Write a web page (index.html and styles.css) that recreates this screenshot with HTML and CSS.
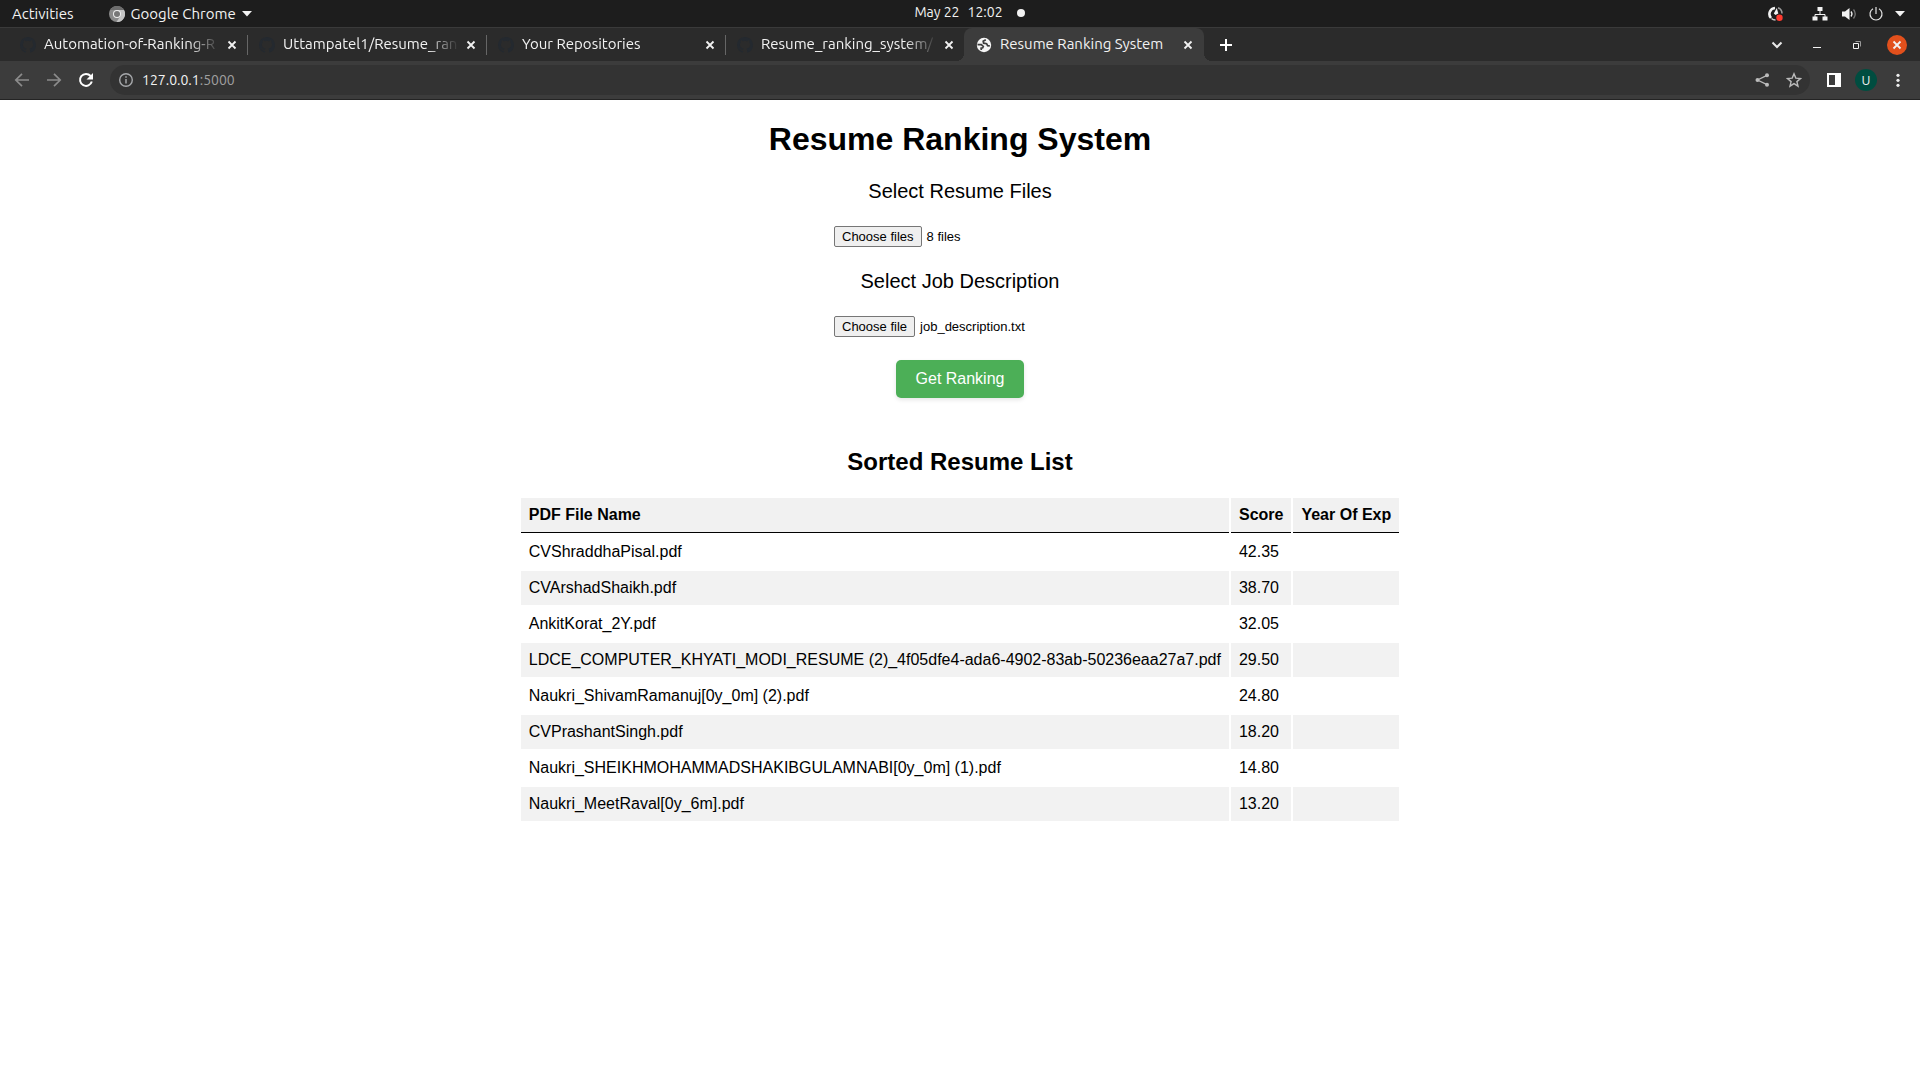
FILE: index.html
```html
<!DOCTYPE html>
<html lang="en">
<head>
<meta charset="utf-8">
<title>Resume Ranking System</title>
<link rel="stylesheet" href="styles.css">
</head>
<body>
<svg class="defs" aria-hidden="true">
  <symbol id="github" viewBox="0 0 16 16"><path d="M8 0C3.58 0 0 3.58 0 8c0 3.54 2.29 6.53 5.47 7.59.4.07.55-.17.55-.38 0-.19-.01-.82-.01-1.49-2.01.37-2.53-.49-2.69-.94-.09-.23-.48-.94-.82-1.13-.28-.15-.68-.52-.01-.53.63-.01 1.08.58 1.23.82.72 1.21 1.87.87 2.33.66.07-.52.28-.87.51-1.07-1.78-.2-3.64-.89-3.64-3.95 0-.87.31-1.59.82-2.15-.08-.2-.36-1.02.08-2.12 0 0 .67-.21 2.2.82a7.6 7.6 0 0 1 4 0c1.53-1.04 2.2-.82 2.2-.82.44 1.1.16 1.92.08 2.12.51.56.82 1.27.82 2.15 0 3.07-1.87 3.75-3.65 3.95.29.25.54.73.54 1.48 0 1.07-.01 1.93-.01 2.2 0 .21.15.46.55.38A8.01 8.01 0 0 0 16 8c0-4.42-3.58-8-8-8z"/></symbol>
  <symbol id="cross" viewBox="0 0 16 16"><path d="M4.500 4.500l7 7M11.500 4.500l-7 7" fill="none" stroke="currentColor" stroke-width="1.800"/></symbol>
  <symbol id="caret" viewBox="0 0 10 6"><path d="M0 0h10L5 5.500z"/></symbol>
</svg>

<header class="system-bar">
  <div class="system-left">
    <button class="plain">Activities</button>
    <button class="plain app-menu">
      <svg class="icon16" viewBox="0 0 16 16"><circle cx="8" cy="8" r="8" fill="#8a8a8a"/><path d="M8 4h7a8 8 0 0 1-7.500 12L11.500 10z" fill="#c4c4c4"/><path d="M1.200 4A8 8 0 0 1 15 4H8z" fill="#6d6d6d"/><circle cx="8" cy="8" r="4" fill="#eee"/><circle cx="8" cy="8" r="3" fill="#777"/></svg>
      <span>Google Chrome</span>
      <svg class="caret"><use href="#caret"/></svg>
    </button>
  </div>
  <button class="plain clock"><span>May 22</span><span>12:02</span><i class="dot"></i></button>
  <div class="system-right">
    <svg class="icon16 recorder" viewBox="0 0 16 16"><path d="M7 2A6 6 0 0 0 3 12" fill="none" stroke="#f2f2f2" stroke-width="2.600"/><path d="M3.500 12.500q1.500 1.500 4 1.500" fill="none" stroke="#ccc" stroke-width="1.500"/><path d="M10 1.700a6.300 6.300 0 0 1 4 5.800" fill="none" stroke="#999" stroke-width="1.600"/><path d="M8.800 2l1.500 5.500L7.500 9 5.800 7.500z" fill="#f2f2f2"/><circle cx="11.500" cy="11.800" r="3.200" fill="#ff3b30"/></svg>
    <svg class="icon16 network" viewBox="0 0 16 16"><path d="M8 5v4M3 12V8.500h10V12" fill="none" stroke="#f2f2f2"/><path d="M5.500 1h5v4h-5zM.500 10.500h5v4h-5zM10.500 10.500h5v4h-5z" fill="#f2f2f2"/></svg>
    <svg class="icon16" viewBox="0 0 16 16"><path d="M1 5.500h3L8.500 2v12L4 10.500H1z" fill="#f2f2f2"/><path d="M10 5.500q2 2.500 0 5" fill="none" stroke="#f2f2f2" stroke-width="1.300"/><path d="M12.500 3.500q3.500 4.500 0 9" fill="none" stroke="#777" stroke-width="1.300"/></svg>
    <svg class="icon16" viewBox="0 0 16 16"><path d="M5 2.800a6 6 0 1 0 6 0M8 1v7" fill="none" stroke="#e4e4e4" stroke-width="1.200"/></svg>
    <svg class="caret"><use href="#caret"/></svg>
  </div>
</header>

<nav class="tab-strip" aria-label="Tabs">
  <div class="tab"><svg class="icon16 github"><use href="#github"/></svg><span class="tab-title">Automation-of-Ranking-R</span><button class="plain" aria-label="Close tab"><svg class="icon16"><use href="#cross"/></svg></button></div>
  <div class="tab"><svg class="icon16 github"><use href="#github"/></svg><span class="tab-title">Uttampatel1/Resume_ran</span><button class="plain" aria-label="Close tab"><svg class="icon16"><use href="#cross"/></svg></button></div>
  <div class="tab"><svg class="icon16 github"><use href="#github"/></svg><span class="tab-title">Your Repositories</span><button class="plain" aria-label="Close tab"><svg class="icon16"><use href="#cross"/></svg></button></div>
  <div class="tab"><svg class="icon16 github"><use href="#github"/></svg><span class="tab-title">Resume_ranking_system/</span><button class="plain" aria-label="Close tab"><svg class="icon16"><use href="#cross"/></svg></button></div>
  <div class="tab active"><svg class="icon16" viewBox="0 0 16 16"><circle cx="8" cy="8" r="7.200" fill="#f5f5f5"/><path d="M1.500 7.600h3.800l2 1.800-.6 1.400-1.600.4.200 1.800" fill="none" stroke="#3c3c3c" stroke-width="1.700"/><path d="M9.800 2.800L7.200 4.300l.4 1.900 3 .5 1 2 2.200.2" fill="none" stroke="#3c3c3c" stroke-width="1.700"/></svg><span class="tab-title">Resume Ranking System</span><button class="plain" aria-label="Close tab"><svg class="icon16"><use href="#cross"/></svg></button></div>
  <button class="plain new-tab" aria-label="New tab"><svg class="icon16" viewBox="0 0 16 16"><path d="M8 2v12M2 8h12" fill="none" stroke="#fff" stroke-width="2"/></svg></button>
  <div class="window-controls">
    <button class="plain" aria-label="Search tabs"><svg class="icon16" viewBox="0 0 16 16"><path d="M3.500 5.500L8 10l4.500-4.500" fill="none" stroke="#e8e8e8" stroke-width="2"/></svg></button>
    <button class="plain" aria-label="Minimize"><svg class="icon16" viewBox="0 0 16 16"><path d="M4 10.500h8" stroke="#f2f2f2"/></svg></button>
    <button class="plain" aria-label="Restore"><svg class="icon16" viewBox="0 0 16 16"><path d="M6.500 4.500h5v5" fill="none" stroke="#999"/><path d="M4.500 6.500h5v5h-5z" fill="none" stroke="#f2f2f2"/></svg></button>
    <button class="plain close-window" aria-label="Close"><svg class="icon16"><use href="#cross"/></svg></button>
  </div>
</nav>

<div class="toolbar">
  <button class="plain muted" aria-label="Back"><svg class="icon16" viewBox="0 0 16 16"><path d="M15 8H2.500M8 1.800L1.800 8 8 14.200" fill="none" stroke="currentColor" stroke-width="1.700"/></svg></button>
  <button class="plain muted" aria-label="Forward"><svg class="icon16" viewBox="0 0 16 16"><path d="M1 8h12.500M8 1.800L14.200 8 8 14.200" fill="none" stroke="currentColor" stroke-width="1.700"/></svg></button>
  <button class="plain" aria-label="Reload"><svg class="icon16" viewBox="0 0 16 16"><path d="M12.600 4A6 6 0 1 0 13.800 9.500" fill="none" stroke="#fff" stroke-width="2"/><path d="M15 1v6.500H8.500z" fill="#fff"/></svg></button>
  <div class="address">
    <svg class="icon16" viewBox="0 0 16 16"><circle cx="8" cy="8" r="6.300" fill="none" stroke="#a6a8ab" stroke-width="1.400"/><path d="M8 7v4.500M8 4.300v1.500" stroke="#a6a8ab" stroke-width="1.500"/></svg>
    <span class="url">127.0.0.1<span class="port">:5000</span></span>
    <button class="plain share" aria-label="Share"><svg class="icon16" viewBox="0 0 16 16"><path d="M13 3.300L3.500 8l9.500 4.700" fill="none" stroke="#bbb" stroke-width="1.300"/><circle cx="13" cy="3.300" r="2" fill="#bbb"/><circle cx="3.500" cy="8" r="2" fill="#bbb"/><circle cx="13" cy="12.700" r="2" fill="#bbb"/></svg></button>
    <button class="plain" aria-label="Bookmark"><svg class="icon16" viewBox="0 0 16 16"><path d="M8 1.800l1.800 4.300 4.700.4-3.600 3.100 1.100 4.600-4-2.500-4 2.500 1.100-4.600-3.600-3.100 4.700-.4z" fill="none" stroke="#bbb" stroke-width="1.400"/></svg></button>
  </div>
  <button class="plain" aria-label="Side panel"><svg class="icon16" viewBox="0 0 16 16"><path d="M1 1h14v14H1zM3 3v10h6V3z" fill="#fff" fill-rule="evenodd"/></svg></button>
  <button class="plain avatar" aria-label="Profile">U</button>
  <button class="plain" aria-label="Menu"><svg class="icon16" viewBox="0 0 16 16"><circle cx="8" cy="3.300" r="1.600" fill="#eee"/><circle cx="8" cy="8.300" r="1.600" fill="#eee"/><circle cx="8" cy="13.300" r="1.600" fill="#eee"/></svg></button>
</div>

<main class="page">
  <h1>Resume Ranking System</h1>
  <form class="upload">
    <label class="field-label" for="resumes">Select Resume Files</label>
    <div class="file-field">
      <input type="file" id="resumes" multiple>
      <span class="choose">Choose files</span><span>8 files</span>
    </div>
    <label class="field-label" for="job">Select Job Description</label>
    <div class="file-field">
      <input type="file" id="job">
      <span class="choose">Choose file</span><span>job_description.txt</span>
    </div>
    <button class="submit" type="submit">Get Ranking</button>
  </form>
  <h2>Sorted Resume List</h2>
  <table>
    <thead><tr><th>PDF File Name</th><th>Score</th><th>Year Of Exp</th></tr></thead>
    <tbody>
      <tr><td>CVShraddhaPisal.pdf</td><td>42.35</td><td></td></tr>
      <tr><td>CVArshadShaikh.pdf</td><td>38.70</td><td></td></tr>
      <tr><td>AnkitKorat_2Y.pdf</td><td>32.05</td><td></td></tr>
      <tr><td>LDCE_COMPUTER_KHYATI_MODI_RESUME (2)_4f05dfe4-ada6-4902-83ab-50236eaa27a7.pdf</td><td>29.50</td><td></td></tr>
      <tr><td>Naukri_ShivamRamanuj[0y_0m] (2).pdf</td><td>24.80</td><td></td></tr>
      <tr><td>CVPrashantSingh.pdf</td><td>18.20</td><td></td></tr>
      <tr><td>Naukri_SHEIKHMOHAMMADSHAKIBGULAMNABI[0y_0m] (1).pdf</td><td>14.80</td><td></td></tr>
      <tr><td>Naukri_MeetRaval[0y_6m].pdf</td><td>13.20</td><td></td></tr>
    </tbody>
  </table>
</main>
</body>
</html>
```
FILE: styles.css
```css
* { box-sizing: border-box; }

body {
  margin: 0;
  background: #fff;
  color: #000;
  font-family: "Liberation Sans", Arial, sans-serif;
  font-size: 16px;
}

.defs { display: none; }

.plain {
  display: flex;
  align-items: center;
  justify-content: center;
  padding: 0;
  border: 0;
  background: none;
  color: inherit;
  font: inherit;
}

.icon16 { display: block; width: 16px; height: 16px; flex: none; }
.caret { width: 10px; height: 6px; fill: #f2f2f2; }

/* Desktop bar */
.system-bar,
.tab-strip,
.toolbar {
  font-family: Ubuntu, "Noto Sans", sans-serif;
  font-size: 15px;
  line-height: 17px;
  color: #f2f2f2;
}

.system-bar {
  display: grid;
  grid-template-columns: 1fr auto 1fr;
  align-items: center;
  height: 27px;
  padding: 0 15px 0 12px;
  background: #1d1d1d;
}

.system-left { display: flex; gap: 35px; }
.app-menu { gap: 6px; }
.clock { gap: 8px; padding: 0 0 2px 22px; font-size: 14px; }
.dot { width: 8px; height: 8px; margin-left: 6px; border-radius: 50%; background: #f2f2f2; }
.system-right { display: flex; align-items: center; justify-content: flex-end; gap: 11px; }
.recorder { margin-right: 17px; }
.network { margin-right: 2px; }

/* Tabs */
.tab-strip {
  display: flex;
  height: 34px;
  padding-left: 8px;
  border-top: 1px solid #3a3a3a;
  background: #2b2b2b;
}

.tab {
  display: flex;
  align-items: center;
  position: relative;
  flex: 0 1 239px;
  min-width: 0;
  padding: 0 3px 0 12px;
}

.tab + .tab { background: linear-gradient(#666, #666) left center / 1px 20px no-repeat; }
.tab .plain { width: 24px; }

.tab-title {
  flex: 1;
  margin-left: 8px;
  padding-bottom: 2px;
  overflow: hidden;
  white-space: nowrap;
  mask-image: linear-gradient(to right, #000 calc(100% - 32px), transparent);
}

.github { fill: #24292f; }

.tab + .tab.active { flex-basis: 240px; padding-right: 4px; border-radius: 8px 8px 0 0; background: #3c3c3c; }
.tab.active .tab-title { mask-image: none; }

.tab.active::before,
.tab.active::after {
  content: "";
  position: absolute;
  bottom: 0;
  width: 8px;
  height: 8px;
}

.tab.active::before { right: 100%; background: radial-gradient(circle at 0 0, transparent 8px, #3c3c3c 8px); }
.tab.active::after { left: 100%; background: radial-gradient(circle at 100% 0, transparent 8px, #3c3c3c 8px); }
.new-tab { width: 44px; }

.window-controls { display: flex; align-items: center; margin-left: auto; padding-right: 13px; gap: 20px; }
.window-controls .plain { width: 20px; height: 20px; }
.window-controls .close-window { border-radius: 50%; background: #e2501c; }

/* Address bar */
.toolbar {
  display: flex;
  align-items: center;
  gap: 16px;
  height: 39px;
  padding: 0 14px;
  border-bottom: 1px solid #242424;
  background: #3c3c3c;
}

.muted { color: #8b8b8b; }

.address {
  display: flex;
  align-items: center;
  flex: 1;
  gap: 8px;
  height: 30px;
  padding: 0 8px;
  border-radius: 15px;
  background: #333;
  font-size: 14px;
}

.share { margin: 0 8px 0 auto; }
.port { color: #a0a0a0; }
.avatar { width: 22px; height: 22px; margin: 0 -3px; border-radius: 50%; background: #004d40; font-size: 13px; }

/* Page */
.page {
  display: flex;
  flex-direction: column;
  align-items: center;
  padding: 21px 8px;
}

h1 { margin: 0 0 22px; font-size: 32px; line-height: 37px; }
h2 { margin: 50px 0 20px; font-size: 24px; line-height: 28px; }

.upload { display: flex; flex-direction: column; align-items: center; }
.field-label { font-size: 20px; line-height: 23px; }

.file-field {
  display: flex;
  align-items: center;
  position: relative;
  gap: 5px;
  width: 252px;
  margin: 23px 0;
  font-size: 13px;
  line-height: 15px;
}

.file-field input { position: absolute; inset: 0; width: 100%; opacity: 0; }

.choose {
  padding: 2px 7px;
  border: 1px solid #767676;
  border-radius: 2px;
  background: #efefef;
}

.submit {
  padding: 10px 20px;
  border: 0;
  border-radius: 5px;
  background: #4caf57;
  box-shadow: 0 2px 4px rgba(0, 0, 0, .1);
  color: #fff;
  font: 16px/18px "Liberation Sans", Arial, sans-serif;
}

table { border-spacing: 2px; line-height: 18px; }
th, td { padding: 8px; text-align: left; }
th { border-bottom: 1px solid #000; background: #f1f1f1; }
tbody tr:nth-child(even) td { background: #f2f2f2; }
```
